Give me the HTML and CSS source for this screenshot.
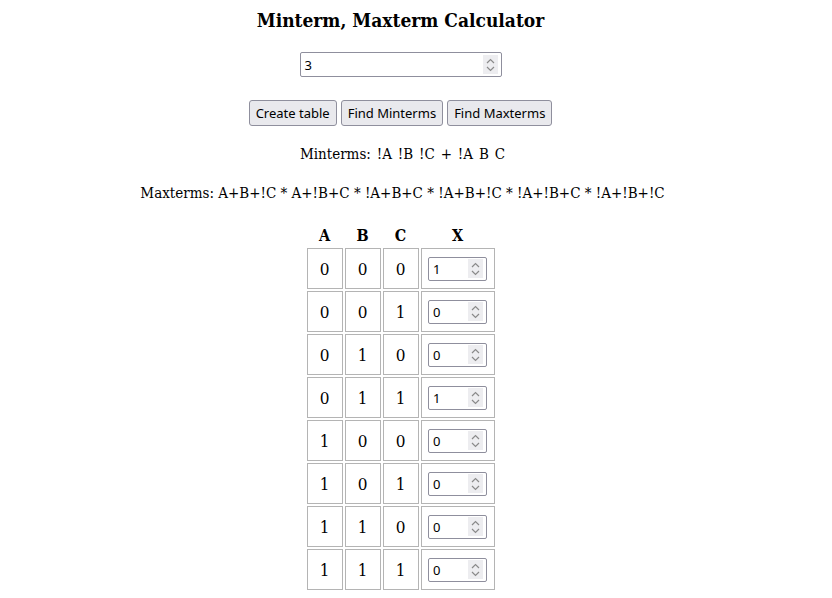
FILE: index.html
```html
<!DOCTYPE html>
<html>
<head>
<meta charset="utf-8">
<link rel="stylesheet" href="styles.css">
</head>
<body>
<div class="page">
  <h1 class="title">Minterm, Maxterm Calculator</h1>
  <div class="numbox main-input"><span class="val">3</span><span class="spin"><svg width="9" height="14" viewBox="0 0 9 14"><path d="M1 5 L4.5 1.5 L8 5 M1 9 L4.5 12.5 L8 9" fill="none" stroke="#8a8a8a" stroke-width="1.2"/></svg></span></div>
  <div class="buttons">
    <button class="btn">Create table</button>
    <button class="btn">Find Minterms</button>
    <button class="btn">Find Maxterms</button>
  </div>
  <p class="result minterms">Minterms: !A !B !C + !A B C</p>
  <p class="result maxterms">Maxterms: A+B+!C * A+!B+C * !A+B+C * !A+B+!C * !A+!B+C * !A+!B+!C</p>
  <table class="truth">
    <thead>
      <tr><th>A</th><th>B</th><th>C</th><th>X</th></tr>
    </thead>
    <tbody id="rows"></tbody>
  </table>
</div>
<script src="script.js"></script>
</body>
</html>
```
FILE: script.js
```js
const xs = [1,0,0,1,0,0,0,0];
const tb = document.getElementById('rows');
for (let i = 0; i < 8; i++) {
  const a = (i >> 2) & 1, b = (i >> 1) & 1, c = i & 1;
  const tr = document.createElement('tr');
  tr.innerHTML = `<td>${a}</td><td>${b}</td><td>${c}</td><td class="xcell"><div class="numbox small"><span class="val">${xs[i]}</span><span class="spin"><svg width="9" height="14" viewBox="0 0 9 14"><path d="M1 5 L4.5 1.5 L8 5 M1 9 L4.5 12.5 L8 9" fill="none" stroke="#8a8a8a" stroke-width="1.2"/></svg></span></div></td>`;
  tb.appendChild(tr);
}
```
FILE: styles.css
```css
html, body { margin: 0; padding: 0; background: #fff; }
body { font-family: "DejaVu Serif Condensed", "DejaVu Serif", serif; font-stretch: semi-condensed; color: #000; }
.page {
  display: flex;
  flex-direction: column;
  align-items: center;
  padding-top: 9px;
  padding-right: 31px;
}
.title {
  font-size: 19px;
  font-weight: bold;
  margin: 0 0 21px 0;
  line-height: 22px;
}
.numbox {
  display: flex;
  align-items: center;
  justify-content: space-between;
  box-sizing: border-box;
  border: 1px solid #8f8f9d;
  border-radius: 2px;
  background: #fff;
  font-family: "Noto Sans", sans-serif;
  font-stretch: normal;
  font-size: 13px;
  color: #000;
}
.main-input { width: 202px; height: 25px; padding: 0 3px 0 4px; }
.spin {
  display: flex;
  align-items: center;
  justify-content: center;
  width: 15px;
  height: 19px;
  background: #ededf0;
}
.buttons {
  display: flex;
  gap: 4px;
  margin-top: 23px;
}
.btn {
  font-family: "Noto Sans", sans-serif;
  font-stretch: normal;
  font-size: 13px;
  height: 26px;
  padding: 0 6px;
  border: 1px solid #8f8f9d;
  border-radius: 3px;
  background: #e9e9ed;
  color: #000;
}
.result {
  font-size: 15px;
  margin: 0;
  line-height: 20px;
  padding-left: 4px;
}
.minterms { word-spacing: 1.6px; margin-top: 18px; }
.maxterms { margin-top: 19px; }
.truth {
  margin-top: 19px;
  border-collapse: separate;
  border-spacing: 2px;
  font-size: 17px;
}
.truth th {
  font-weight: bold;
  font-size: 16px;
  height: 22px;
  padding: 0;
}
.truth td {
  border: 1px solid #b4b4b4;
  width: 36px;
  height: 41px;
  padding: 0;
  text-align: center;
  box-sizing: border-box;
}
.truth td.xcell { width: 74px; }
.small { width: 59px; height: 24px; margin: 0 auto; padding: 0 3px 0 4px; }
```
